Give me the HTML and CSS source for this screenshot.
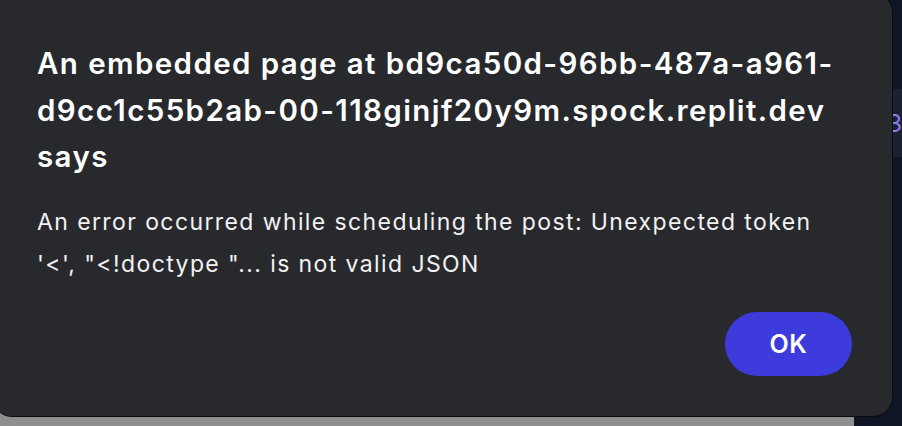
FILE: index.html
```html
<!DOCTYPE html>
<html>
<head>
<meta charset="utf-8">
<link rel="stylesheet" href="styles.css">
</head>
<body>
<div class="page">
  <div class="main">
    <div class="main-top"></div>
    <div class="main-rest"></div>
  </div>
  <div class="side">
    <div class="side-strip"><span class="side-num">3</span></div>
  </div>
</div>
<div class="dialog" role="alertdialog">
  <h1 class="title">An embedded page at bd9ca50d-96bb-487a-a961-d9cc1c55b2ab-00-118ginjf20y9m.spock.replit.dev says</h1>
  <p class="message">An error occurred while scheduling the post: Unexpected token '&lt;', "&lt;!doctype "... is not valid JSON</p>
  <div class="actions">
    <button class="ok">OK</button>
  </div>
</div>
</body>
</html>
```

FILE: styles.css
```css
html, body {
  margin: 0;
  padding: 0;
  width: 902px;
  height: 426px;
  overflow: hidden;
  background: #0f1524;
  font-family: Inter, "Noto Sans", sans-serif;
}
.page {
  display: flex;
  height: 426px;
}
.main {
  width: 860px;
  display: flex;
  flex-direction: column;
}
.main-top {
  height: 300px;
  background: #0f1524;
}
.main-rest {
  flex: 1;
  background: #8f8f8f;
}
.side {
  flex: 1;
  padding-top: 89px;
}
.side-strip {
  height: 68px;
  background: #1b2132;
  display: flex;
  align-items: center;
  padding-left: 33px;
}
.side-num {
  color: #8b7cf0;
  font-size: 24px;
}
.dialog {
  position: absolute;
  left: -8px;
  top: -8px;
  width: 901px;
  height: 425px;
  box-sizing: border-box;
  background: #28292d;
  border: 1px solid #0b0c0f;
  border-radius: 20px;
  padding: 47px 40px 40px 44px;
  display: flex;
  flex-direction: column;
  color: #fff;
}
.title {
  margin: 0;
  font-size: 29.5px;
  font-weight: 600;
  letter-spacing: 1.4px;
  line-height: 46.5px;
  width: 820px;
}
.message {
  margin: 21px 0 0 0;
  font-size: 23px;
  font-weight: 400;
  letter-spacing: 1.4px;
  line-height: 42px;
  color: #f2f2f2;
  width: 800px;
}
.actions {
  margin-top: auto;
  display: flex;
  justify-content: flex-end;
}
.ok {
  width: 127px;
  height: 64px;
  border: none;
  border-radius: 32px;
  background: #3d3bdc;
  color: #fff;
  font-family: Inter, "Noto Sans", sans-serif;
  font-size: 25px;
  font-weight: 600;
  letter-spacing: 0.5px;
}
```
